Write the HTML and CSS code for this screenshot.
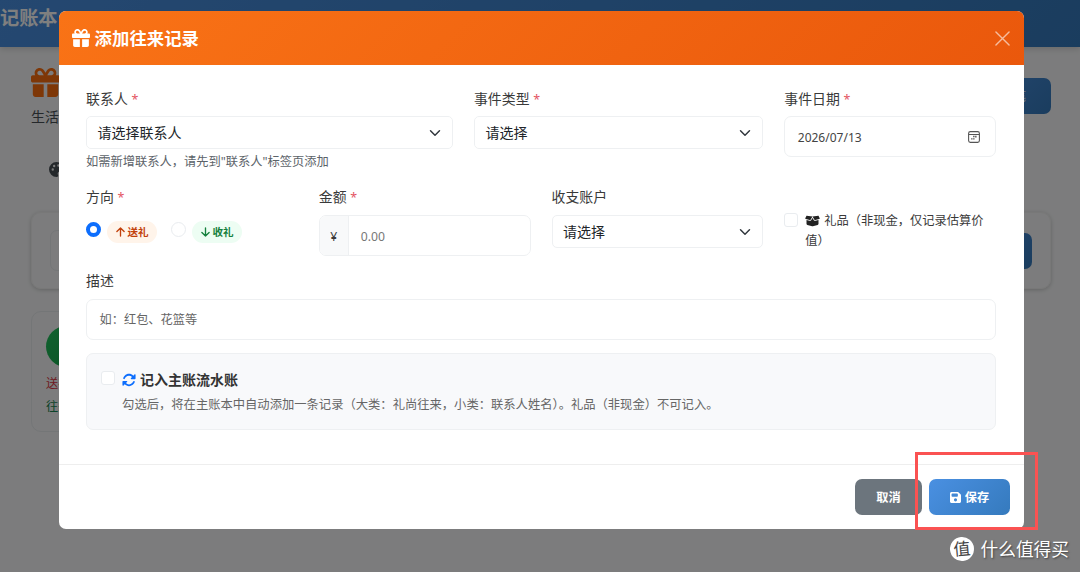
FILE: index.html
```html
<!DOCTYPE html>
<html lang="zh-CN">
<head>
    <meta charset="UTF-8">
    <meta name="viewport" content="width=device-width, initial-scale=1.0">
    <title>添加往来记录</title>
    <link rel="stylesheet" href="styles.css">
</head>
<body>
    <svg class="sprite" width="0" height="0">
        <symbol id="gift" viewBox="0 0 512 512"><path d="M190.5 68.8L225.3 128H224 152c-22.1 0-40-17.9-40-40s17.9-40 40-40h2.2c14.9 0 28.8 7.9 36.3 20.8zM64 88c0 14.4 3.5 28 9.6 40H32c-17.7 0-32 14.3-32 32v64c0 17.7 14.3 32 32 32H480c17.7 0 32-14.3 32-32V160c0-17.7-14.3-32-32-32H438.4c6.1-12 9.6-25.6 9.6-40c0-48.6-39.4-88-88-88h-2.2c-31.9 0-61.5 16.9-77.7 44.4L256 85.5l-24.1-41C215.7 16.9 186.1 0 154.2 0H152C103.4 0 64 39.4 64 88zm336 0c0 22.1-17.9 40-40 40H288h-1.3l34.8-59.2C329.1 55.9 342.9 48 357.8 48H360c22.1 0 40 17.9 40 40zM32 288V464c0 26.5 21.5 48 48 48H224V288H32zM288 512H432c26.5 0 48-21.5 48-48V288H288V512z"/></symbol>
        <symbol id="chevron" viewBox="0 0 16 16"><path d="m2 5 6 6 6-6" fill="none" stroke="#343a40" stroke-width="2" stroke-linecap="round" stroke-linejoin="round"/></symbol>
    </svg>

    <nav class="navbar"><span class="brand">记账本</span></nav>
    <main class="page">
        <div class="page-head">
            <div>
                <svg class="page-icon"><use href="#gift"/></svg>
                <p class="page-sub">生活往来</p>
            </div>
            <button class="btn btn-primary btn-add">记一笔</button>
        </div>
        <div class="tabs">
            <svg class="tab-icon" viewBox="0 0 16 16"><path fill-rule="evenodd" d="M8 0a8 8 0 1 0 0 16c2 0 2-1.500 1.500-2.500-.8-2 .5-3.500 2-3.500H14c1.300 0 2-.8 2-2a8 8 0 0 0-8-8zM4 6.700a1.200 1.200 0 1 1 0 2.500 1.200 1.200 0 0 1 0-2.500zM5.500 3a1.200 1.200 0 1 1 0 2.500 1.200 1.200 0 0 1 0-2.500zM10 2.500A1.200 1.200 0 1 1 10 5a1.200 1.200 0 0 1 0-2.500z"/></svg>
        </div>
        <div class="filter-card">
            <div class="filter-input"></div>
            <div class="btn btn-primary filter-btn"></div>
        </div>
        <div class="person-card">
            <div class="avatar"></div>
            <p class="sent">送礼</p>
            <p class="count">往来</p>
        </div>
    </main>

    <div class="backdrop">
        <div class="modal">
            <div class="modal-header">
                <svg class="title-icon"><use href="#gift"/></svg>
                <h5 class="modal-title">添加往来记录</h5>
                <svg class="btn-close" viewBox="0 0 16 16"><path d="M1 1l14 14M15 1L1 15" fill="none" stroke="#fff" stroke-width="1.500" stroke-linecap="round"/></svg>
            </div>

            <div class="modal-body">
                <div class="row row-top">
                    <div class="col-5">
                        <label class="form-label">联系人 <span class="required">*</span></label>
                        <div class="form-select">请选择联系人<svg><use href="#chevron"/></svg></div>
                        <div class="form-text">如需新增联系人，请先到"联系人"标签页添加</div>
                    </div>
                    <div class="col-4">
                        <label class="form-label">事件类型 <span class="required">*</span></label>
                        <div class="form-select">请选择<svg><use href="#chevron"/></svg></div>
                    </div>
                    <div class="col-3">
                        <label class="form-label">事件日期 <span class="required">*</span></label>
                        <div class="form-control date">
                            <span>2026/07/13</span>
                            <svg class="calendar" viewBox="0 0 12 12"><rect x=".6" y=".6" width="10.800" height="10.800" rx="1.800" fill="none" stroke="#555" stroke-width="1.100"/><path d="M1 3.500h10" stroke="#555" stroke-width="1"/><path d="M5.200 5.500h1.300M7.200 5.500h1.300M3.200 7.900h1.300M5.200 7.900h1.300M7.200 5.900h1.300" stroke="#444" stroke-width="1.300"/></svg>
                        </div>
                    </div>
                </div>

                <div class="row row-middle">
                    <div class="col-3">
                        <label class="form-label">方向 <span class="required">*</span></label>
                        <div class="directions">
                            <span class="radio checked"></span>
                            <span class="badge badge-out"><svg viewBox="0 0 10 11"><path d="M5 10V1M1 5l4-4 4 4"/></svg>送礼</span>
                            <span class="radio"></span>
                            <span class="badge badge-in"><svg viewBox="0 0 10 11"><path d="M5 1v9M1 6l4 4 4-4"/></svg>收礼</span>
                        </div>
                    </div>
                    <div class="col-3">
                        <label class="form-label">金额 <span class="required">*</span></label>
                        <div class="input-group">
                            <span class="addon">¥</span>
                            <span class="placeholder">0.00</span>
                        </div>
                    </div>
                    <div class="col-3">
                        <label class="form-label">收支账户</label>
                        <div class="form-select">请选择<svg><use href="#chevron"/></svg></div>
                    </div>
                    <div class="col-3 gift-check">
                        <span class="checkbox"></span>
                        <div class="gift-label"><svg viewBox="0 0 640 512"><path d="M58.9 42.1c3-6.1 9.6-9.6 16.3-8.7L320 64 564.8 33.4c6.7-.8 13.3 2.7 16.3 8.7l41.7 83.4c9 17.9-.6 39.6-19.8 45.1L439.6 217.3c-13.9 4-28.8-1.9-36.2-14.3L320 64 236.6 203c-7.4 12.4-22.3 18.3-36.2 14.3L37.1 170.6c-19.3-5.5-28.8-27.2-19.8-45.1L58.9 42.1zM321.1 128l54.9 91.4c14.9 24.8 44.6 36.6 72.5 28.6L576 211.6v167c0 22-15 41.2-36.4 46.6l-204.1 51c-10.2 2.6-20.9 2.6-31 0l-204.1-51C79 419.7 64 400.5 64 378.5v-167L191.6 248c27.8 8 57.6-3.8 72.5-28.6L318.9 128h2.2z"/></svg>礼品（非现金，仅记录估算价值）</div>
                    </div>
                </div>

                <label class="form-label label-desc">描述</label>
                <div class="form-control"><span class="placeholder-text">如：红包、花篮等</span></div>

                <div class="sync-box">
                    <span class="checkbox"></span>
                    <div>
                        <div class="sync-title"><svg viewBox="0 0 512 512"><path d="M142.9 142.9c62.2-62.2 162.7-62.5 225.3-1L327 183c-6.9 6.9-8.9 17.2-5.2 26.2s12.5 14.8 22.2 14.8H472c13.3 0 24-10.7 24-24V72c0-9.7-5.8-18.5-14.8-22.2s-19.3-1.7-26.2 5.2L413.4 96.6c-87.6-86.5-228.7-86.2-315.8 1C73.2 122 55.6 150.7 44.8 181.4c-5.9 16.7 2.9 34.9 19.5 40.8s34.900-2.900 40.800-19.500c7.700-21.800 20.200-42.300 37.800-59.800zM16 312V440c0 9.700 5.800 18.500 14.800 22.200s19.300 1.700 26.200-5.200l41.600-41.600c87.600 86.500 228.700 86.200 315.800-1c24.400-24.400 42.100-53.100 52.900-83.700c5.900-16.700-2.900-34.900-19.500-40.800s-34.900 2.900-40.800 19.500c-7.700 21.800-20.200 42.300-37.800 59.800c-62.200 62.200-162.700 62.500-225.300 1L185 329c6.900-6.900 8.900-17.200 5.200-26.200s-12.500-14.800-22.200-14.800H40c-13.300 0-24 10.700-24 24z"/></svg>记入主账流水账</div>
                        <div class="sync-text">勾选后，将在主账本中自动添加一条记录（大类：礼尚往来，小类：联系人姓名）。礼品（非现金）不可记入。</div>
                    </div>
                </div>
            </div>

            <div class="modal-footer">
                <button class="btn btn-secondary">取消</button>
                <button class="btn btn-primary"><svg viewBox="0 0 448 512"><path d="M64 32C28.7 32 0 60.7 0 96V416c0 35.300 28.700 64 64 64H384c35.300 0 64-28.700 64-64V173.300c0-17-6.700-33.300-18.700-45.300L352 50.700C340 38.700 323.700 32 306.700 32H64zm0 96c0-17.700 14.300-32 32-32H288c17.700 0 32 14.300 32 32v64c0 17.700-14.300 32-32 32H96c-17.700 0-32-14.300-32-32V128zM224 288a64 64 0 1 1 0 128 64 64 0 1 1 0-128z"/></svg>保存</button>
            </div>
        </div>
    </div>

    <div class="highlight"></div>
    <div class="watermark"><span class="watermark-logo">值</span>什么值得买</div>
</body>
</html>
```
FILE: styles.css
```css
* {
    box-sizing: border-box;
}
body {
    margin: 0;
    height: 572px;
    overflow: hidden;
    position: relative;
    background-color: #f8f9fa;
    color: #3a3a3a;
    font-family: 'Noto Sans', 'Noto Sans CJK SC', sans-serif;
    font-size: 14px;
    line-height: 20px;
}
p, h5 {
    margin: 0;
}
.sprite {
    display: block;
}

/* page behind the dialog */
.navbar {
    height: 47px;
    background: linear-gradient(135deg, #4a90e2, #357abd);
    box-shadow: 0 2px 6px rgba(0, 0, 0, 0.15);
}
.brand {
    display: block;
    padding-top: 7px;
    font-size: 19.2px;
    line-height: 22px;
    font-weight: 700;
    color: #fff;
}
.page {
    padding: 21px 29px 0 31px;
}
.page-head {
    display: flex;
    justify-content: space-between;
    align-items: flex-start;
    height: 92px;
}
.page-icon {
    display: block;
    width: 29px;
    height: 29px;
    fill: #fd6f0e;
}
.page-sub {
    margin-top: 10px;
    color: #495057;
}
.btn-add {
    margin-top: 10px;
    width: 86px;
}
.tabs {
    padding: 2px 18px;
    height: 52px;
}
.tab-icon {
    width: 15px;
    height: 15px;
    fill: #495057;
}
.filter-card {
    display: flex;
    justify-content: space-between;
    align-items: center;
    height: 77px;
    padding: 0 18px;
    border: 1px solid #f0f0f0;
    border-radius: 10px;
    box-shadow: 0 1px 4px rgba(0, 0, 0, 0.2);
}
.filter-input {
    width: 200px;
    height: 41px;
    border: 1px solid #e9ecef;
    border-radius: 7px;
}
.filter-btn {
    width: 80px;
}
.person-card {
    width: 300px;
    height: 121px;
    margin-top: 22px;
    padding: 14px;
    border: 1px solid #e9ecef;
    border-radius: 10px;
}
.avatar {
    width: 41px;
    height: 41px;
    margin-bottom: 7px;
    border-radius: 50%;
    background: linear-gradient(135deg, #22c55e, #16a34a);
}
.sent {
    color: #dc3545;
    font-size: 12.2px;
}
.count {
    margin-top: 3px;
    color: #198754;
    font-size: 12.2px;
}

/* dialog */
.backdrop {
    position: absolute;
    inset: 0;
    padding: 11px 56px 0 58.6px;
    background-color: rgba(0, 0, 0, 0.5);
}
.modal {
    height: 518px;
    overflow: hidden;
    border-radius: 7px;
    background-color: #fff;
}
.modal-header {
    display: flex;
    align-items: center;
    height: 54px;
    padding: 0 14px 0 13px;
    background: linear-gradient(135deg, #f97316, #ea580c);
    color: #fff;
}
.title-icon {
    width: 18px;
    height: 18px;
    margin-right: 5px;
    fill: #fff;
}
.modal-title {
    font-size: 17.4px;
    font-weight: 600;
    line-height: 26px;
}
.btn-close {
    width: 15px;
    height: 15px;
    margin-left: auto;
    opacity: 0.6;
}
.modal-body {
    height: 399px;
    padding: 24px 28px 0 27.5px;
}
.row {
    display: grid;
    grid-template-columns: repeat(12, 1fr);
    column-gap: 21px;
}
.row-top {
    height: 98px;
}
.row-middle {
    height: 84px;
}
.col-5 {
    grid-column: span 5;
}
.col-4 {
    grid-column: span 4;
}
.col-3 {
    grid-column: span 3;
}
.form-label {
    display: block;
    height: 27px;
    font-size: 13.9px;
    font-weight: 400;
}
.row-middle .form-label {
    height: 28px;
}
.label-desc {
    height: 28px;
}
.required {
    color: #e35462;
    font-size: 12.5px;
}
.form-select {
    display: flex;
    align-items: center;
    justify-content: space-between;
    height: 33px;
    padding: 0 11px 0 10.5px;
    border: 1px solid #eef0f2;
    border-radius: 5px;
    color: #212529;
}
.form-select svg {
    width: 12px;
    height: 12px;
}
.form-text {
    margin-top: 3px;
    font-size: 12.25px;
    color: #5c6369;
}
.form-control {
    display: flex;
    align-items: center;
    justify-content: space-between;
    height: 41px;
    padding: 0 15px 0 12.5px;
    border: 1px solid #eef0f2;
    border-radius: 7px;
    font-size: 12.2px;
}
.date span {
    padding-top: 2px;
    font-size: 12px;
    color: #444;
}
.calendar {
    width: 12px;
    height: 12px;
}
.placeholder-text {
    padding-top: 1px;
    color: #666;
}
.directions {
    display: flex;
    align-items: flex-start;
    padding-top: 5px;
}
.radio {
    width: 15px;
    height: 15px;
    margin: 2px 6px 0 0;
    border: 1px solid #e9ecef;
    border-radius: 50%;
}
.radio.checked {
    border: 4px solid #0d6efd;
}
.badge {
    display: flex;
    align-items: center;
    justify-content: center;
    width: 50px;
    height: 22px;
    margin: 1px 14px 0 0;
    border-radius: 11px;
    font-size: 10.5px;
    font-weight: 700;
}
.badge svg {
    width: 9px;
    height: 10px;
    margin-right: 3px;
    fill: none;
    stroke: currentColor;
    stroke-width: 1.5;
    stroke-linecap: round;
    stroke-linejoin: round;
}
.badge-out {
    background-color: #fff4ea;
    color: #c2410c;
}
.badge-in {
    background-color: #edfdf3;
    color: #15803d;
}
.input-group {
    display: flex;
    height: 41px;
    border: 1px solid #eef0f2;
    border-radius: 7px;
    overflow: hidden;
    font-size: 12.2px;
    line-height: 41px;
}
.addon {
    width: 29px;
    border-right: 1px solid #eef0f2;
    background-color: #f8f9fa;
    text-align: center;
}
.placeholder {
    padding-left: 12px;
    color: #777;
}
.checkbox {
    flex: none;
    width: 14px;
    height: 14px;
    border: 1px solid #e9ecef;
    border-radius: 3px;
    background-color: #fff;
}
.gift-check {
    display: flex;
    padding-top: 24px;
}
.gift-check .checkbox {
    margin-top: 2px;
}
.gift-label {
    margin-left: 7px;
    font-size: 12.25px;
}
.gift-label svg {
    width: 15px;
    height: 12px;
    margin-right: 4px;
    vertical-align: -2px;
    fill: #222;
}
.sync-box {
    display: flex;
    height: 77px;
    margin-top: 13px;
    padding: 16px 14px;
    border: 1px solid #eef0f2;
    border-radius: 7px;
    background-color: #f8f9fb;
}
.sync-box .checkbox {
    margin: 1px 7px 0 0;
}
.sync-title {
    display: flex;
    align-items: center;
    height: 20px;
    font-weight: 700;
    color: #333;
}
.sync-title svg {
    width: 14px;
    height: 14px;
    margin-right: 4px;
    fill: #0d6efd;
}
.sync-text {
    margin-top: 5px;
    font-size: 12.3px;
    color: #666;
}
.modal-footer {
    display: flex;
    justify-content: flex-end;
    gap: 7px;
    height: 65px;
    padding: 14px 14px 0;
    border-top: 1px solid #eee;
}
.btn {
    display: flex;
    align-items: center;
    justify-content: center;
    height: 36px;
    border: 0;
    border-radius: 7px;
    color: #fff;
    font-family: inherit;
    font-size: 12.2px;
    font-weight: 600;
}
.btn-primary {
    width: 81px;
    background: linear-gradient(135deg, #4a90e2, #357abd);
}
.btn-secondary {
    width: 67px;
    background-color: #6c757d;
}
.btn svg {
    width: 11px;
    height: 13px;
    margin-right: 4px;
    fill: #fff;
}
.btn.btn-add {
    width: 86px;
    font-weight: 400;
}

/* marks drawn over the dialog */
.highlight {
    position: absolute;
    left: 915px;
    top: 452px;
    width: 123px;
    height: 78px;
    border: 3px solid #fa5252;
}
.watermark {
    position: absolute;
    right: 11px;
    bottom: 11px;
    display: flex;
    align-items: center;
    gap: 7px;
    height: 24px;
    color: #fff;
    font-size: 17.7px;
    text-shadow: 1px 1px 2px rgba(0, 0, 0, 0.5);
}
.watermark-logo {
    width: 24px;
    height: 24px;
    border-radius: 50%;
    background-color: #fff;
    color: #444;
    font-size: 17px;
    line-height: 23px;
    text-align: center;
    text-shadow: none;
    transform: rotate(-5deg);
}
```
